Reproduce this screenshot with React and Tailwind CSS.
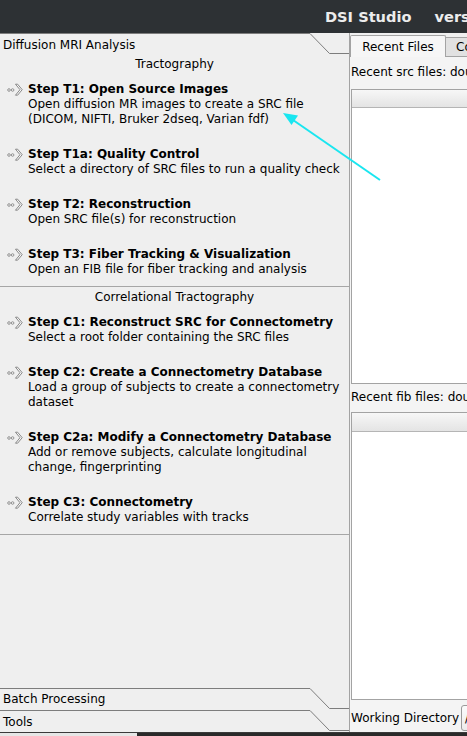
import React from "react";

const FONT = { fontFamily: '"DejaVu Sans", "Liberation Sans", sans-serif' };

function StepIcon() {
  return (
    <svg width="16" height="13" viewBox="0 0 16 13" className="shrink-0">
      <circle cx="2" cy="7" r="1.3" fill="none" stroke="#8a8a8a" strokeWidth="0.9" />
      <circle cx="5.6" cy="7" r="1.3" fill="none" stroke="#8a8a8a" strokeWidth="0.9" />
      <path d="M8.5 1.2 L10.6 1.2 L15.2 6.7 L10.6 12.2 L8.5 12.2 L13 6.7 Z" fill="#fafafa" stroke="#7a7a7a" strokeWidth="0.9" strokeLinejoin="round" />
    </svg>
  );
}

function Step({ title, lines }) {
  return (
    <div className="flex items-start">
      <div className="w-[28px] pl-[7px] pt-[1px] shrink-0">
        <StepIcon />
      </div>
      <div className="leading-[15px] text-[12px] text-black">
        <div className="font-bold">{title}</div>
        {lines.map((l, i) => (
          <div key={i}>{l}</div>
        ))}
      </div>
    </div>
  );
}

function TabHeader({ label, pt }) {
  return (
    <div className="relative h-[22px] shrink-0">
      <svg className="absolute left-0 top-0" width="349" height="22" viewBox="0 0 349 22">
        <polyline points="0,0.5 310,0.5 329.5,20.5 349,20.5" fill="none" stroke="#7d7d7d" strokeWidth="1" />
      </svg>
      <div className={"relative pl-[3px] text-[12px] leading-[15px] text-black " + (pt === 4 ? "pt-[4px]" : "pt-[5px]")}>{label}</div>
    </div>
  );
}

export default function App() {
  return (
    <div style={FONT} className="relative w-[467px] h-[736px] overflow-hidden bg-[#efefef]">
      {/* title bar */}
      <div className="h-[33px] bg-[#2d3134] flex items-center pl-[325px] text-[14.6px] font-bold text-[#ececec] whitespace-nowrap">
        <span>DSI Studio</span>
        <span className="ml-[23px]">version 2024</span>
      </div>

      <div className="flex h-[699px]">
        {/* left toolbox */}
        <div className="w-[349px] shrink-0 flex flex-col">
          <TabHeader label="Diffusion MRI Analysis" />
          <div className="flex-1 flex flex-col">
            <div className="flex flex-col pt-[2px] pb-[9px] border-b border-[#a6a6a6]">
              <div className="text-center text-[12px] leading-[15px] text-black">Tractography</div>
              <div className="mt-[10px] flex flex-col gap-[20px]">
                <Step title="Step T1: Open Source Images" lines={["Open diffusion MR images to create a SRC file", "(DICOM, NIFTI, Bruker 2dseq, Varian fdf)"]} />
                <Step title="Step T1a: Quality Control" lines={["Select a directory of SRC files to run a quality check"]} />
                <Step title="Step T2: Reconstruction" lines={["Open SRC file(s) for reconstruction"]} />
                <Step title="Step T3: Fiber Tracking & Visualization" lines={["Open an FIB file for fiber tracking and analysis"]} />
              </div>
            </div>
            <div className="flex flex-col pt-[3px] pb-[9px] border-b border-[#a6a6a6]">
              <div className="text-center text-[12px] leading-[15px] text-black">Correlational Tractography</div>
              <div className="mt-[10px] flex flex-col gap-[20px]">
                <Step title="Step C1: Reconstruct SRC for Connectometry" lines={["Select a root folder containing the SRC files"]} />
                <Step title="Step C2: Create a Connectometry Database" lines={["Load a group of subjects to create a connectometry", "dataset"]} />
                <Step title="Step C2a: Modify a Connectometry Database" lines={["Add or remove subjects, calculate longitudinal", "change, fingerprinting"]} />
                <Step title="Step C3: Connectometry" lines={["Correlate study variables with tracks"]} />
              </div>
            </div>
          </div>
          <TabHeader label="Batch Processing" pt={4} />
          <TabHeader label="Tools" />
        </div>

        {/* right tabs */}
        <div className="flex-1 border-l border-[#a3a3a3] overflow-hidden flex flex-col">
          <div className="h-[24px] shrink-0 flex items-end whitespace-nowrap text-[12px] text-black">
            <div className="h-[22px] w-[96px] shrink-0 bg-[#f6f6f6] border border-b-0 border-[#a3a3a3] rounded-t-[2px] flex items-center justify-center">
              Recent Files
            </div>
            <div className="h-[20px] w-[120px] shrink-0 bg-[#e1e1e1] border border-l-0 border-[#a3a3a3] rounded-tr-[2px] flex items-center pl-[10px]">
              Console
            </div>
          </div>
          <div className="flex-1 bg-[#f4f4f4] flex flex-col pl-[1px] w-[300px] text-[12px] text-black whitespace-nowrap">
            <div className="shrink-0 pt-[8px] pb-[9px] leading-[15px]">Recent src files: double click to open</div>
            <div className="h-[295px] shrink-0 border border-[#a3a3a3] bg-white flex flex-col">
              <div className="h-[18px] shrink-0 bg-gradient-to-b from-[#f7f7f7] to-[#e4e4e4] border-b border-[#b5b5b5]" />
            </div>
            <div className="shrink-0 pt-[6px] pb-[7px] leading-[15px]">Recent fib files: double click to open</div>
            <div className="h-[288px] shrink-0 border border-[#a3a3a3] bg-white flex flex-col">
              <div className="h-[19px] shrink-0 bg-gradient-to-b from-[#f7f7f7] to-[#e4e4e4] border-b border-[#b5b5b5]" />
            </div>
            <div className="shrink-0 flex items-center h-[32px] pt-[4px]">
              <span className="leading-[15px]">Working Directory</span>
              <div className="ml-[2px] h-[26px] w-[120px] border border-[#9a9a9a] rounded-[3px] bg-gradient-to-b from-[#fbfbfb] to-[#ececec] flex items-center pl-[3px]">/home/user</div>
            </div>
          </div>
        </div>
      </div>

      {/* bottom edge */}
      <div className="h-[1px] bg-[#3a3a3a]" />
      <div className="h-[3px] flex">
        <div className="w-[137px] bg-[#e6e6e6]" />
        <div className="flex-1 bg-[#2a2a2a]" />
      </div>

      {/* annotation arrow */}
      <svg className="absolute left-0 top-0 pointer-events-none" width="467" height="736" viewBox="0 0 467 736">
        <line x1="380" y1="180" x2="293" y2="120" stroke="#19e6f0" strokeWidth="2" />
        <polygon points="283,113 298,115.5 291.5,125" fill="#19e6f0" />
      </svg>
    </div>
  );
}
